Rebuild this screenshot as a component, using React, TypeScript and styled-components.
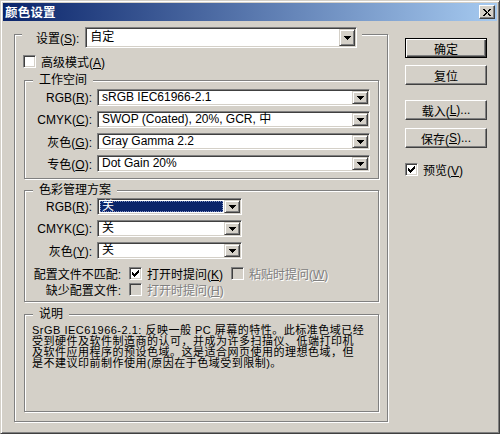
import React from 'react';
import styled, { createGlobalStyle, css } from 'styled-components';

const Global = createGlobalStyle`
  html, body { margin: 0; padding: 0; background: #d4d0c8; }
  body {
    font-family: "Liberation Sans", "Noto Sans CJK SC", sans-serif;
    font-size: 12px;
    color: #000;
  }
  u { text-decoration: underline; text-underline-offset: 1px; }
`;

const Window = styled.div`
  width: 500px;
  height: 434px;
  box-sizing: border-box;
  background: #d4d0c8;
  border: 1px solid;
  border-color: #d4d0c8 #404040 #404040 #d4d0c8;
  box-shadow: inset 1px 1px #fff, inset -1px -1px #808080;
  padding: 2px;
  display: flex;
  flex-direction: column;
`;

const TitleBar = styled.div`
  height: 18px;
  flex: none;
  display: flex;
  align-items: center;
  justify-content: space-between;
  padding: 0 2px 0 2px;
  background: linear-gradient(to right, #0a246a, #a6caf0);
`;

const TitleText = styled.div`
  color: #fff;
  font-family: "Noto Sans CJK SC", sans-serif;
  font-weight: bold;
  font-size: 12.5px;
  line-height: 18px;
  letter-spacing: 0.2px;
`;

const CloseButton = styled.div`
  width: 16px;
  height: 14px;
  box-sizing: border-box;
  background: #d4d0c8;
  border: 1px solid;
  border-color: #fff #404040 #404040 #fff;
  box-shadow: inset -1px -1px #808080;
  display: flex;
  align-items: center;
  justify-content: center;
`;

const Body = styled.div`
  display: flex;
  align-items: flex-start;
  padding: 13px 0 0 11px;
`;

const Frame = styled.div`
  width: 374px;
  box-sizing: border-box;
  border: 1px solid #808080;
  box-shadow: inset 1px 1px #fff, 1px 1px #fff;
  display: flex;
  flex-direction: column;
`;

const FrameHeader = styled.div`
  align-self: flex-start;
  margin: -8px 0 0 7px;
  padding: 0 5px 0 14px;
  background: #d4d0c8;
  display: flex;
  align-items: center;
  gap: 6px;
`;

const HeaderLabel = styled.span`
  white-space: nowrap;
`;

const Select = styled.div<{ $w: number; $h: number }>`
  width: ${p => p.$w}px;
  height: ${p => p.$h}px;
  box-sizing: border-box;
  background: #fff;
  border: 1px solid;
  border-color: #808080 #fff #fff #808080;
  box-shadow: inset 1px 1px #404040, inset -1px -1px #d4d0c8;
  padding: 1px;
  display: flex;
  align-items: stretch;
  flex: none;
`;

const Value = styled.div<{ $sel?: boolean }>`
  flex: 1;
  display: flex;
  align-items: center;
  padding-left: 3px;
  line-height: 13px;
  white-space: nowrap;
  ${p =>
    p.$sel &&
    css`
      background: #0a246a;
      color: #fff;
      margin: 1px;
      padding-left: 2px;
      outline: 1px dotted #8090c0;
      outline-offset: -1px;
    `}
`;

const DropButton = styled.div`
  width: 16px;
  flex: none;
  box-sizing: border-box;
  background: #d4d0c8;
  border: 1px solid;
  border-color: #d4d0c8 #404040 #404040 #d4d0c8;
  box-shadow: inset 1px 1px #fff, inset -1px -1px #808080;
  display: flex;
  align-items: center;
  justify-content: center;
`;

const Arrow = () => (
  <svg width="7" height="4" viewBox="0 0 7 4" shapeRendering="crispEdges">
    <path d="M0 0h7v1H0z M1 1h5v1H1z M2 2h3v1H2z M3 3h1v1H3z" fill="#000" />
  </svg>
);

const Box = styled.div<{ $disabled?: boolean; $ml?: number }>`
  width: 13px;
  height: 13px;
  flex: none;
  box-sizing: border-box;
  margin-left: ${p => p.$ml ?? 0}px;
  background: ${p => (p.$disabled ? '#d4d0c8' : '#fff')};
  border: 1px solid;
  border-color: #808080 #fff #fff #808080;
  box-shadow: inset 1px 1px #404040, inset -1px -1px #d4d0c8;
  display: flex;
  align-items: center;
  justify-content: center;
`;

const CheckBox = ({ checked, disabled, ml }: { checked?: boolean; disabled?: boolean; ml?: number }) => (
  <Box $disabled={disabled} $ml={ml}>
    {checked && (
      <svg width="7" height="7" viewBox="0 0 7 7" shapeRendering="crispEdges">
        <path
          d="M0 2h1v3H0z M1 3h1v3H1z M2 4h1v3H2z M3 3h1v3H3z M4 2h1v3H4z M5 1h1v3H5z M6 0h1v3H6z"
          fill="#000"
        />
      </svg>
    )}
  </Box>
);

const CheckRow = styled.div<{ $mt?: number; $ml?: number }>`
  display: flex;
  align-items: center;
  gap: 5px;
  height: 13px;
  margin-top: ${p => p.$mt ?? 0}px;
  margin-left: ${p => p.$ml ?? 0}px;
  white-space: nowrap;
`;

const Text = styled.span<{ $disabled?: boolean; $ml?: number }>`
  white-space: nowrap;
  margin-left: ${p => p.$ml ?? 0}px;
  ${p =>
    p.$disabled &&
    css`
      color: #808080;
      text-shadow: 1px 1px #fff;
    `}
`;

const Group = styled.div<{ $h: number; $mt: number }>`
  height: ${p => p.$h}px;
  box-sizing: border-box;
  margin: ${p => p.$mt}px 8px 0 9px;
  border: 1px solid #808080;
  box-shadow: inset 1px 1px #fff, 1px 1px #fff;
  display: flex;
  flex-direction: column;
`;

const GroupTitle = styled.div`
  align-self: flex-start;
  margin: -7px 0 0 8px;
  padding: 0 6px;
  height: 13px;
  line-height: 13px;
  background: #d4d0c8;
`;

const Fields = styled.div<{ $mt: number }>`
  display: flex;
  flex-direction: column;
  gap: 5px;
  margin-top: ${p => p.$mt}px;
`;

const FieldRow = styled.div`
  display: flex;
  align-items: center;
  gap: 5px;
`;

const FieldLabel = styled.span<{ $w: number }>`
  width: ${p => p.$w}px;
  flex: none;
  text-align: right;
  white-space: nowrap;
`;

const OptionRows = styled.div`
  display: flex;
  flex-direction: column;
  gap: 3px;
  margin-top: 8px;
`;

const OptionRow = styled.div`
  display: flex;
  align-items: center;
  height: 13px;
`;

const OptionLabel = styled.span`
  width: 96px;
  flex: none;
  text-align: right;
  margin-right: 8px;
  white-space: nowrap;
`;

const Description = styled.div`
  margin-top: 4px;
  padding: 0 7px;
  font-size: 11px;
  letter-spacing: 0.5px;
  line-height: 11px;
`;

const Line = styled.div`
  white-space: nowrap;
  height: 11px;
`;

const RightColumn = styled.div`
  margin: 4px 0 0 17px;
  width: 82px;
  display: flex;
  flex-direction: column;
`;

const Button = styled.div<{ $default?: boolean; $mt?: number }>`
  height: 20px;
  box-sizing: border-box;
  margin-top: ${p => p.$mt ?? 0}px;
  display: flex;
  align-items: center;
  justify-content: center;
  white-space: nowrap;
  background: #d4d0c8;
  ${p =>
    p.$default
      ? css`
          border: 1px solid #000;
          box-shadow: inset 1px 1px #fff, inset -1px -1px #404040, inset -2px -2px #808080;
        `
      : css`
          border: 1px solid;
          border-color: #fff #404040 #404040 #fff;
          box-shadow: inset -1px -1px #808080;
        `}
`;

const FrameBottomSpace = styled.div`
  height: 9px;
`;

export default function App() {
  return (
    <>
      <Global />
      <Window>
        <TitleBar>
          <TitleText>颜色设置</TitleText>
          <CloseButton>
            <svg width="8" height="7" viewBox="0 0 8 7" shapeRendering="crispEdges">
              <path
                d="M0 0h2v1H0z M1 1h2v1H1z M2 2h1.5v1H2z M3 3h2v1H3z M4.5 2h1.5v1H4.5z M5 1h2v1H5z M6 0h2v1H6z M2 4h1.5v1H2z M1 5h2v1H1z M0 6h2v1H0z M4.5 4h1.5v1H4.5z M5 5h2v1H5z M6 6h2v1H6z"
                fill="#000"
              />
            </svg>
          </CloseButton>
        </TitleBar>
        <Body>
          <Frame>
            <FrameHeader>
              <HeaderLabel>
                设置(<u>S</u>):
              </HeaderLabel>
              <Select $w={272} $h={21}>
                <Value>自定</Value>
                <DropButton>
                  <Arrow />
                </DropButton>
              </Select>
            </FrameHeader>

            <CheckRow $mt={7} $ml={8}>
              <CheckBox />
              <Text>
                高级模式(<u>A</u>)
              </Text>
            </CheckRow>

            <Group $h={99} $mt={12}>
              <GroupTitle>工作空间</GroupTitle>
              <Fields $mt={2}>
                <FieldRow>
                  <FieldLabel $w={67}>
                    RGB(<u>R</u>):
                  </FieldLabel>
                  <Select $w={273} $h={17}>
                    <Value>sRGB IEC61966-2.1</Value>
                    <DropButton>
                      <Arrow />
                    </DropButton>
                  </Select>
                </FieldRow>
                <FieldRow>
                  <FieldLabel $w={67}>
                    CMYK(<u>C</u>):
                  </FieldLabel>
                  <Select $w={273} $h={17}>
                    <Value>SWOP (Coated), 20%, GCR, 中</Value>
                    <DropButton>
                      <Arrow />
                    </DropButton>
                  </Select>
                </FieldRow>
                <FieldRow>
                  <FieldLabel $w={67}>
                    灰色(<u>G</u>):
                  </FieldLabel>
                  <Select $w={273} $h={17}>
                    <Value>Gray Gamma 2.2</Value>
                    <DropButton>
                      <Arrow />
                    </DropButton>
                  </Select>
                </FieldRow>
                <FieldRow>
                  <FieldLabel $w={67}>
                    专色(<u>O</u>):
                  </FieldLabel>
                  <Select $w={273} $h={17}>
                    <Value>Dot Gain 20%</Value>
                    <DropButton>
                      <Arrow />
                    </DropButton>
                  </Select>
                </FieldRow>
              </Fields>
            </Group>

            <Group $h={112} $mt={11}>
              <GroupTitle>色彩管理方案</GroupTitle>
              <Fields $mt={1}>
                <FieldRow>
                  <FieldLabel $w={67}>
                    RGB(<u>R</u>):
                  </FieldLabel>
                  <Select $w={145} $h={17}>
                    <Value $sel>关</Value>
                    <DropButton>
                      <Arrow />
                    </DropButton>
                  </Select>
                </FieldRow>
                <FieldRow>
                  <FieldLabel $w={67}>
                    CMYK(<u>C</u>):
                  </FieldLabel>
                  <Select $w={145} $h={17}>
                    <Value>关</Value>
                    <DropButton>
                      <Arrow />
                    </DropButton>
                  </Select>
                </FieldRow>
                <FieldRow>
                  <FieldLabel $w={67}>
                    灰色(<u>Y</u>):
                  </FieldLabel>
                  <Select $w={145} $h={17}>
                    <Value>关</Value>
                    <DropButton>
                      <Arrow />
                    </DropButton>
                  </Select>
                </FieldRow>
              </Fields>
              <OptionRows>
                <OptionRow>
                  <OptionLabel>配置文件不匹配:</OptionLabel>
                  <CheckBox checked />
                  <Text $ml={5}>
                    打开时提问(<u>K</u>)
                  </Text>
                  <CheckBox disabled ml={8} />
                  <Text $ml={5} $disabled>
                    粘贴时提问(<u>W</u>)
                  </Text>
                </OptionRow>
                <OptionRow>
                  <OptionLabel>缺少配置文件:</OptionLabel>
                  <CheckBox disabled />
                  <Text $ml={5} $disabled>
                    打开时提问(<u>H</u>)
                  </Text>
                </OptionRow>
              </OptionRows>
            </Group>

            <Group $h={98} $mt={12}>
              <GroupTitle>说明</GroupTitle>
              <Description>
                <Line>SrGB IEC61966-2.1: 反映一般 PC 屏幕的特性。此标准色域已经</Line>
                <Line>受到硬件及软件制造商的认可，并成为许多扫描仪、低端打印机</Line>
                <Line>及软件应用程序的预设色域。这是适合网页使用的理想色域，但</Line>
                <Line>是不建议印前制作使用(原因在于色域受到限制)。</Line>
              </Description>
            </Group>
            <FrameBottomSpace />
          </Frame>

          <RightColumn>
            <Button $default>确定</Button>
            <Button $mt={7}>复位</Button>
            <Button $mt={15}>
              载入(<u>L</u>)...
            </Button>
            <Button $mt={8}>
              保存(<u>S</u>)...
            </Button>
            <CheckRow $mt={15}>
              <CheckBox checked />
              <Text>
                预览(<u>V</u>)
              </Text>
            </CheckRow>
          </RightColumn>
        </Body>
      </Window>
    </>
  );
}
